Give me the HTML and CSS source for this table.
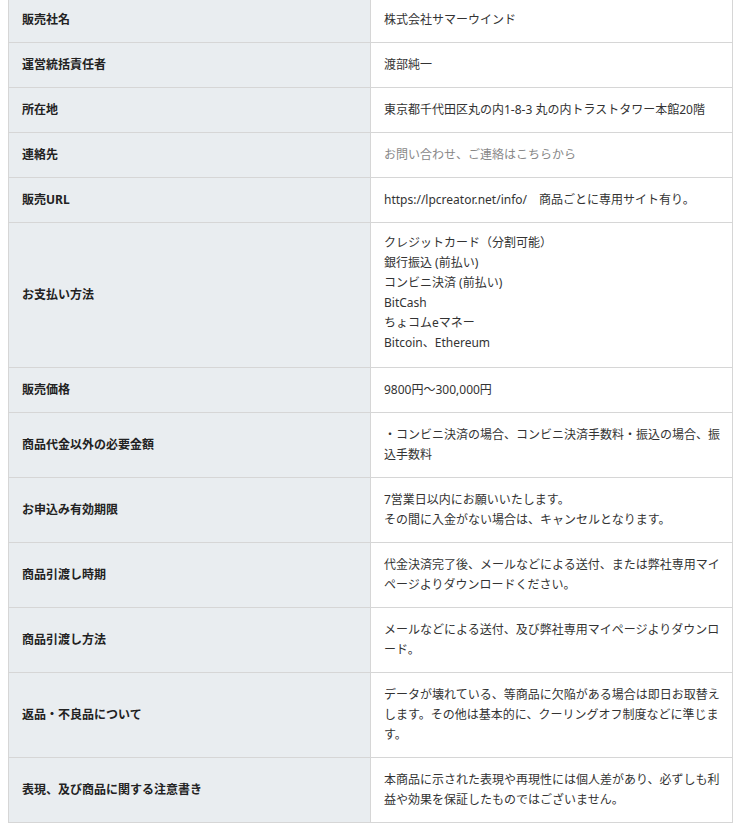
FILE: index.html
```html
<!DOCTYPE html>
<html lang="ja">
<head>
<meta charset="utf-8">
<link rel="stylesheet" href="styles.css">
</head>
<body>
<div class="wrap">
<table class="law">
  <tr><th>販売社名</th><td>株式会社サマーウインド</td></tr>
  <tr><th>運営統括責任者</th><td>渡部純一</td></tr>
  <tr><th>所在地</th><td>東京都千代田区丸の内1-8-3 丸の内トラストタワー本館20階</td></tr>
  <tr><th>連絡先</th><td><span class="link">お問い合わせ、ご連絡はこちらから</span></td></tr>
  <tr><th>販売URL</th><td>https://lpcreator.net/info/　商品ごとに専用サイト有り。</td></tr>
  <tr><th>お支払い方法</th><td class="pay">クレジットカード（分割可能）<br>銀行振込 (前払い)<br>コンビニ決済 (前払い)<br>BitCash<br>ちょコムeマネー<br>Bitcoin、Ethereum</td></tr>
  <tr><th>販売価格</th><td>9800円～300,000円</td></tr>
  <tr><th>商品代金以外の必要金額</th><td>・コンビニ決済の場合、コンビニ決済手数料・振込の場合、振込手数料</td></tr>
  <tr><th>お申込み有効期限</th><td>7営業日以内にお願いいたします。<br>その間に入金がない場合は、キャンセルとなります。</td></tr>
  <tr><th>商品引渡し時期</th><td>代金決済完了後、メールなどによる送付、または弊社専用マイページよりダウンロードください。</td></tr>
  <tr><th>商品引渡し方法</th><td>メールなどによる送付、及び弊社専用マイページよりダウンロード。</td></tr>
  <tr><th>返品・不良品について</th><td>データが壊れている、等商品に欠陥がある場合は即日お取替えします。その他は基本的に、クーリングオフ制度などに準じます。</td></tr>
  <tr><th>表現、及び商品に関する注意書き</th><td>本商品に示された表現や再現性には個人差があり、必ずしも利益や効果を保証したものではございません。</td></tr>
</table>
</div>
</body>
</html>
```

FILE: styles.css
```css
html, body {
  margin: 0;
  padding: 0;
  background: #ffffff;
}
body {
  font-family: "Noto Sans", "Noto Sans CJK JP", sans-serif;
  font-size: 12px;
  line-height: 20px;
  color: #333333;
}
.wrap {
  padding: 0 0 0 8px;
  margin-top: -3px;
}
.law {
  width: 725px;
  border-collapse: collapse;
  table-layout: fixed;
}
.law th,
.law td {
  border: 1px solid #d6d6d6;
  padding: 12px 10px 12px 13px;
  vertical-align: middle;
  text-align: left;
  width: 50%;
}
.law th {
  background: #e9edf0;
  font-weight: bold;
  color: #222222;
}
.law td {
  background: #ffffff;
  font-weight: normal;
}
.law td.pay {
  padding-top: 10px;
  padding-bottom: 14px;
}
.link {
  color: #888888;
}
```
